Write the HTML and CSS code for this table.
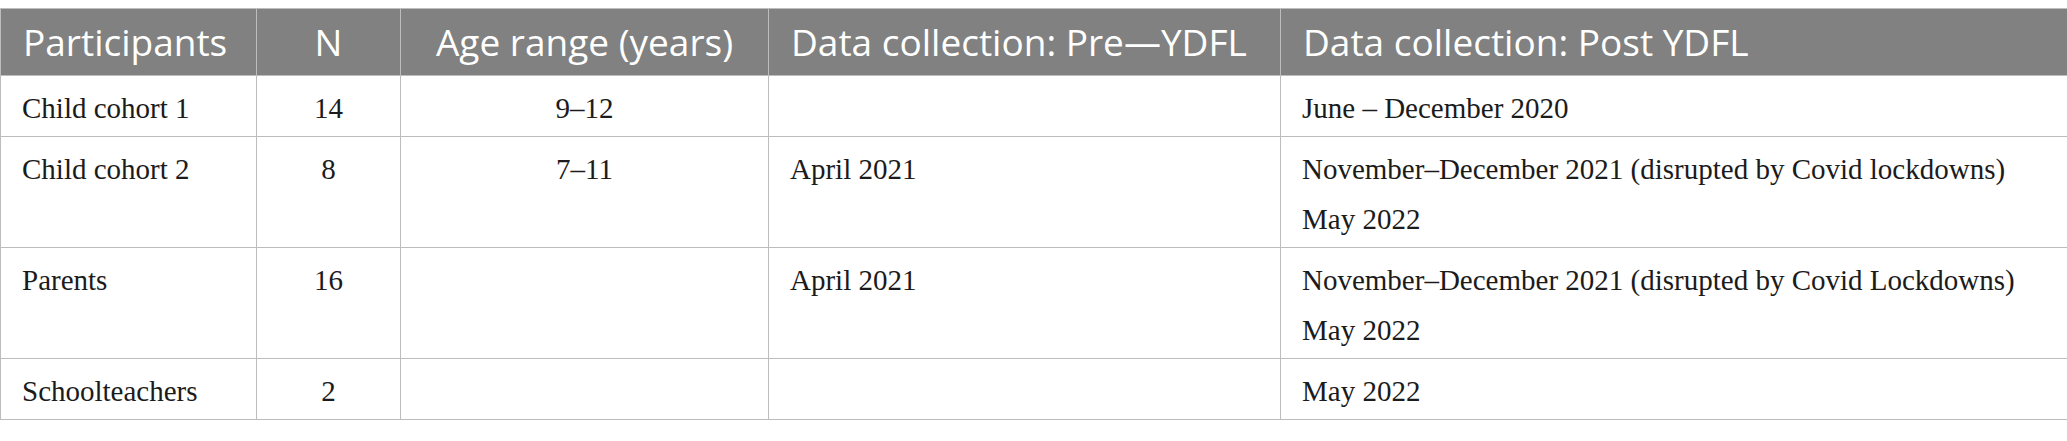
FILE: index.html
```html
<!DOCTYPE html>
<html lang="en">
<head>
<meta charset="utf-8">
<title>Participants table</title>
<link rel="stylesheet" href="styles.css">
</head>
<body>
<table class="data-table">
  <colgroup>
    <col class="col-part">
    <col class="col-n">
    <col class="col-age">
    <col class="col-pre">
    <col class="col-post">
  </colgroup>
  <thead>
    <tr>
      <th class="left">Participants</th>
      <th class="center">N</th>
      <th class="center">Age range (years)</th>
      <th class="left">Data collection: Pre—YDFL</th>
      <th class="left">Data collection: Post YDFL</th>
    </tr>
  </thead>
  <tbody>
    <tr>
      <td class="left">Child cohort 1</td>
      <td class="center">14</td>
      <td class="center">9–12</td>
      <td class="left"></td>
      <td class="left">June – December 2020</td>
    </tr>
    <tr>
      <td class="left">Child cohort 2</td>
      <td class="center">8</td>
      <td class="center">7–11</td>
      <td class="left">April 2021</td>
      <td class="left">November–December 2021 (disrupted by Covid lockdowns)<br>May 2022</td>
    </tr>
    <tr>
      <td class="left">Parents</td>
      <td class="center">16</td>
      <td class="center"></td>
      <td class="left">April 2021</td>
      <td class="left">November–December 2021 (disrupted by Covid Lockdowns)<br>May 2022</td>
    </tr>
    <tr>
      <td class="left">Schoolteachers</td>
      <td class="center">2</td>
      <td class="center"></td>
      <td class="left"></td>
      <td class="left">May 2022</td>
    </tr>
  </tbody>
</table>
</body>
</html>
```
FILE: styles.css
```css
html, body {
  background: #ffffff;
}
body {
  margin: 8px 0 0 0;
}
.data-table {
  width: 2067px;
  border-collapse: collapse;
  table-layout: fixed;
}
.col-part { width: 256px; }
.col-n { width: 144px; }
.col-age { width: 368px; }
.col-pre { width: 512px; }
.col-post { width: 787px; }

.data-table th,
.data-table td {
  border: 1px solid #bdbdbd;
  vertical-align: top;
}
.data-table th {
  background: #808180;
  color: #ffffff;
  font-family: "Open Sans", "Noto Sans", sans-serif;
  font-weight: 400;
  font-size: 37px;
  line-height: 50px;
  padding: 8px 22px 8px 22px;
  white-space: nowrap;
}
.data-table td {
  color: #1b1b1b;
  font-family: "Liberation Serif", "Times New Roman", serif;
  font-size: 29px;
  line-height: 50px;
  padding: 7px 21px 3px 21px;
  white-space: nowrap;
}
.left { text-align: left; }
.center { text-align: center; }
```
